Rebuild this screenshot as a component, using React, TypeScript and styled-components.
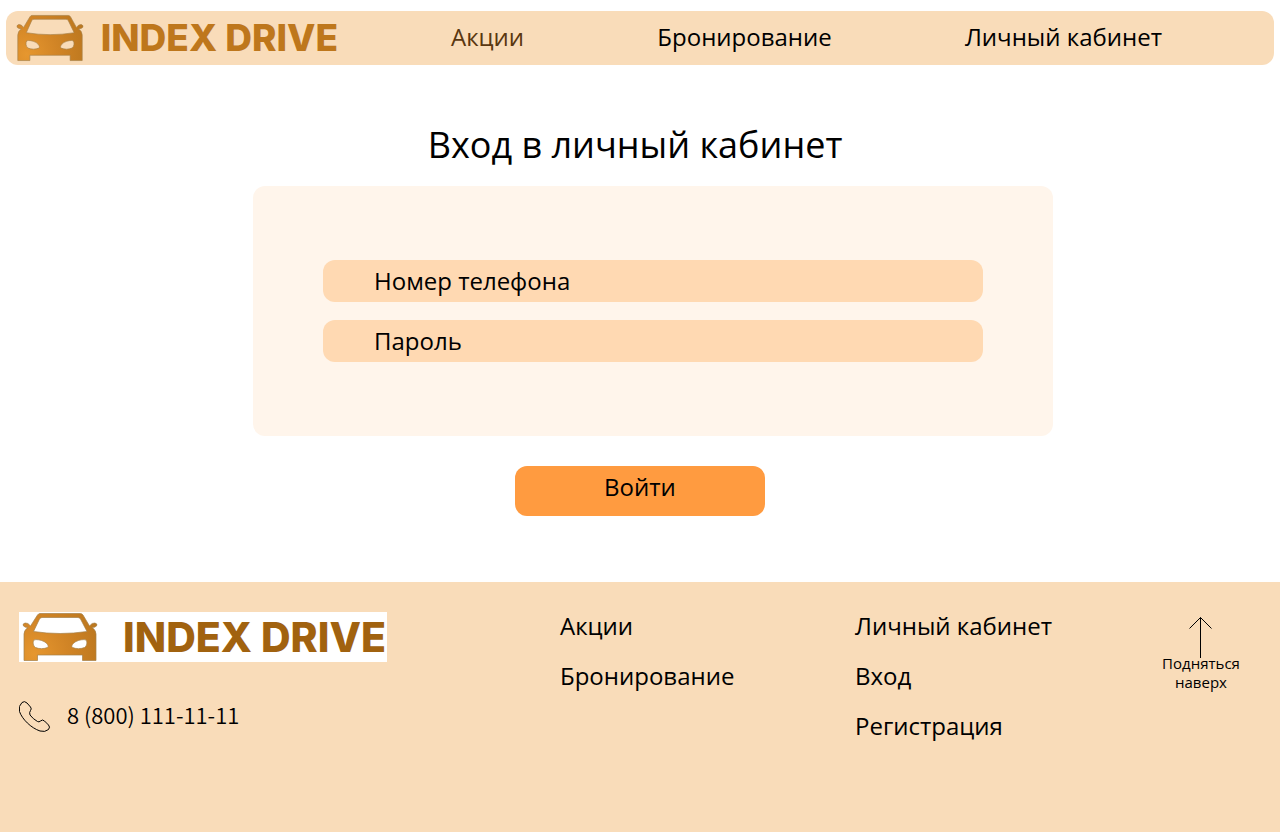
import React, { useId } from "react";
import styled, { createGlobalStyle } from "styled-components";

const GlobalStyle = createGlobalStyle`
  *, *::before, *::after { box-sizing: border-box; }
  html { height: 100%; }
  body {
    min-height: 100%;
    margin: 0;
    background: #fff;
    color: #000;
    font-family: "Open Sans", "Noto Sans", sans-serif;
    font-size: 24px;
    line-height: 28px;
  }
`;

const Page = styled.div`
  min-height: 100vh;
  display: flex;
  flex-direction: column;
`;

const Header = styled.header`
  display: flex;
  align-items: center;
  height: 54px;
  margin: 11px 6px 0;
  padding-left: 10px;
  background: #f9dcb9;
  border-radius: 12px;
`;

const Nav = styled.nav`
  flex: 1;
  display: flex;
  justify-content: space-between;
  padding: 0 112px 2px;
`;

const TextLink = styled.a<{ $active?: boolean }>`
  color: ${(p) => (p.$active ? "#5a3710" : "#000")};
  text-decoration: none;
  white-space: nowrap;
`;

const Brand = styled.a<{ $footer?: boolean }>`
  display: flex;
  flex: none;
  align-items: center;
  justify-content: space-between;
  width: ${(p) => (p.$footer ? "368px" : "323px")};
  height: ${(p) => (p.$footer ? "50px" : "48px")};
  padding: ${(p) => (p.$footer ? "0 1px 0 3px" : "0 1px 0 0")};
  background: ${(p) => (p.$footer ? "#fff" : "transparent")};
  text-decoration: none;
`;

const CarIcon = styled.svg<{ $footer?: boolean }>`
  width: ${(p) => (p.$footer ? "76px" : "68px")};
  height: ${(p) => (p.$footer ? "50px" : "48px")};
`;

const BrandName = styled.span<{ $footer?: boolean }>`
  color: ${(p) => (p.$footer ? "#a1620f" : "#be771c")};
  font-family: Inter, sans-serif;
  font-size: ${(p) => (p.$footer ? "41px" : "37px")};
  font-weight: 800;
  line-height: 48px;
  white-space: nowrap;
`;

const Main = styled.main`
  flex: 1;
  display: flex;
  flex-direction: column;
  align-items: center;
  padding: 55px 0 66px;
`;

const Title = styled.h1`
  margin: 0 10px 16px 0;
  font-size: 36px;
  font-weight: 400;
  line-height: 50px;
`;

const Form = styled.form`
  display: flex;
  flex-direction: column;
  align-items: center;
  gap: 30px;
  width: 100%;
`;

const Card = styled.div`
  display: flex;
  flex-direction: column;
  justify-content: center;
  gap: 18px;
  width: 800px;
  max-width: 100%;
  height: 250px;
  margin-left: 26px;
  padding: 0 70px;
  background: #fff5eb;
  border-radius: 12px;
`;

const Field = styled.input`
  width: 100%;
  height: 42px;
  padding: 0 51px 2px;
  border: 0;
  border-radius: 12px;
  background: #ffd9b2;
  color: #000;
  font: inherit;
  &::placeholder { color: #000; opacity: 1; }
`;

const Submit = styled.button`
  width: 250px;
  height: 50px;
  padding: 0 0 8px;
  border: 0;
  border-radius: 12px;
  background: #ff9b40;
  color: #000;
  font: inherit;
  cursor: pointer;
`;

const Footer = styled.footer`
  display: grid;
  grid-template-columns: 541fr 295fr 284fr 124fr;
  min-height: 250px;
  padding: 30px 17px 30px 19px;
  background: #f9dcb9;
`;

const Column = styled.div`
  display: flex;
  flex-direction: column;
  align-items: flex-start;
  gap: 22px;
  min-width: 0;
`;

const Contacts = styled(Column)`
  gap: 38px;
`;

const Phone = styled.a`
  display: flex;
  align-items: center;
  gap: 16px;
  color: #000;
  font-family: "Noto Sans CJK SC", sans-serif;
  font-size: 22px;
  font-weight: 350;
  text-decoration: none;

  span { padding-bottom: 6px; }
`;

const ToTop = styled.a`
  display: flex;
  flex-direction: column;
  align-items: center;
  padding-top: 4px;
  color: #000;
  font-size: 15px;
  line-height: 19px;
  text-align: center;
  text-decoration: none;

  svg { margin-bottom: -4px; }
`;

function Logo({ footer = false }: { footer?: boolean }) {
  const fill = useId();
  return (
    <Brand href="#" $footer={footer}>
      <CarIcon $footer={footer} viewBox="0 0 76 50" preserveAspectRatio="none" aria-hidden="true">
        <defs>
          <radialGradient id={fill} gradientUnits="userSpaceOnUse" cx="12" cy="42" r="66">
            <stop offset="0" stopColor="#e6972f" />
            <stop offset="0.5" stopColor="#d28526" />
            <stop offset="1" stopColor="#bd781f" />
          </radialGradient>
        </defs>
        <path
          fill={`url(#${fill})`}
          fillRule="evenodd"
          stroke="#a58048"
          strokeOpacity="0.7"
          d="M18 1.500H58.500Q60 1.500 61 3L67.500 14Q70 10.500 73 11Q76 12 74.500 14Q73 15.500 70 15.500Q74 18 74 22V48.500H60.500V43H15.500V48.500H2V22Q2 18 6 15.500Q3 15.500 1.500 14Q0 12 3 11Q6 10.500 8.500 14L15.500 3Q16.500 1.500 18 1.500ZM20 5.500Q18.500 5.500 17.500 7L11.500 19.500Q38 23.500 65 19.500L58.500 7Q57.500 5.500 56 5.500ZM12 28C10.500 30 11 34 13.500 35.500C17 37 22 37 25.500 35.500C27.500 34.500 25 31 22 29.500C19 28 14 27 12 28ZM64 28C65.500 30 65 34 62.500 35.500C59 37 54 37 50.500 35.500C48.500 34.500 51 31 54 29.500C57 28 62 27 64 28Z"
        />
      </CarIcon>
      <BrandName $footer={footer}>INDEX DRIVE</BrandName>
    </Brand>
  );
}

export default function App() {
  return (
    <Page>
      <GlobalStyle />
      <Header>
        <Logo />
        <Nav>
          <TextLink href="#" $active>Акции</TextLink>
          <TextLink href="#">Бронирование</TextLink>
          <TextLink href="#">Личный кабинет</TextLink>
        </Nav>
      </Header>
      <Main>
        <Title>Вход в личный кабинет</Title>
        <Form onSubmit={(e) => e.preventDefault()}>
          <Card>
            <Field type="tel" aria-label="Номер телефона" placeholder="Номер телефона" />
            <Field type="password" aria-label="Пароль" placeholder="Пароль" />
          </Card>
          <Submit type="submit">Войти</Submit>
        </Form>
      </Main>
      <Footer>
        <Contacts>
          <Logo footer />
          <Phone href="tel:88001111111">
            <svg width="32" height="32" viewBox="0 0 32 32" fill="none" stroke="#000" aria-hidden="true">
              <path d="M3 1.500Q5.500 -0.500 8 2L11.500 6Q13 8 11.500 9.500Q10 11.500 11 14Q14 18 18.500 20.500Q20 21.500 21.500 20Q23.500 18 25.500 20L29.500 24Q31.500 26 29.500 28.500Q26 31.500 21 30C12 27 3 18 0.500 10.500Q-1 5 3 1.500Z" />
            </svg>
            <span>8 (800) 111-11-11</span>
          </Phone>
        </Contacts>
        <Column>
          <TextLink href="#">Акции</TextLink>
          <TextLink href="#">Бронирование</TextLink>
        </Column>
        <Column>
          <TextLink href="#">Личный кабинет</TextLink>
          <TextLink href="#">Вход</TextLink>
          <TextLink href="#">Регистрация</TextLink>
        </Column>
        <ToTop href="#">
          <svg width="24" height="42" viewBox="0 0 24 42" fill="none" stroke="#000" aria-hidden="true">
            <path d="M11.500 42V1.500M0.500 12.500L11.500 1.500L22.500 12.500" />
          </svg>
          <span>Подняться<br />наверх</span>
        </ToTop>
      </Footer>
    </Page>
  );
}
